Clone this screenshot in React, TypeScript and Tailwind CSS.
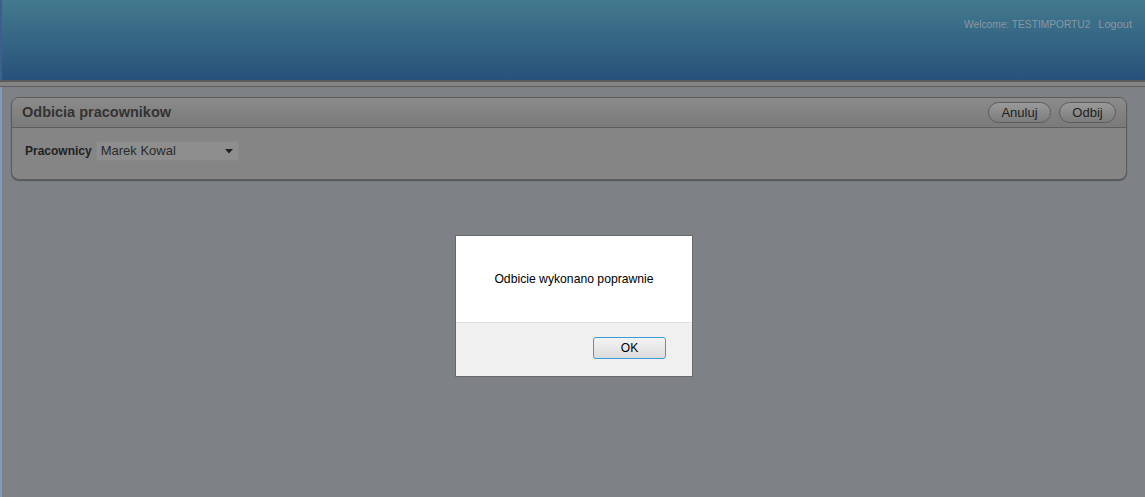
import React from "react";

export default function App() {
  return (
    <div className="relative w-[1145px] h-[497px] overflow-hidden bg-[#7e8287] font-['Liberation_Sans',Arial,sans-serif]">
      {/* header */}
      <div className="h-[80px] bg-gradient-to-b from-[#437a8e] to-[#28517a] border-l-2 border-[#3c5f8e] flex justify-end items-start pt-[16px] pr-[13px]">
        <div className="text-[11px] text-[#8797a4] flex items-baseline gap-[8px]">
          <span className="text-[10.2px]">Welcome: TESTIMPORTU2</span>
          <span>Logout</span>
        </div>
      </div>
      <div className="h-[7px] bg-[#848484] border-t-2 border-b border-[#5a5a5a] border-b-[#5e5e5e]" />
      <div className="border-l-2 border-[#7f9bbd] h-[410px] pl-[9px] pr-[18px] pt-[10px]">
        <div className="rounded-[8px] border border-[#5c5c5c] bg-[#858585] shadow-[0_1px_1px_rgba(0,0,0,0.35)] overflow-hidden">
          <div className="h-[30px] bg-gradient-to-b from-[#8b8b8b] to-[#7a7a7a] border-b border-[#5e5e5e] flex items-center justify-between pl-[10px] pr-[10px]">
            <span className="text-[14.5px] font-bold text-[#333333]">Odbicia pracownikow</span>
            <div className="flex gap-[8px]">
              <button className="w-[63px] h-[21px] rounded-full border border-[#5c5c5c] bg-gradient-to-b from-[#9a9a9a] to-[#7c7c7c] text-[13px] text-[#222] leading-none">Anuluj</button>
              <button className="w-[57px] h-[21px] rounded-full border border-[#5c5c5c] bg-gradient-to-b from-[#9a9a9a] to-[#7c7c7c] text-[13px] text-[#222] leading-none">Odbij</button>
            </div>
          </div>
          <div className="h-[51px] flex items-start pt-[13px] pl-[13px]">
            <span className="text-[12px] font-bold text-[#222] leading-[20px] mr-[4px]">Pracownicy</span>
            <div className="w-[143px] h-[20px] bg-[#8e8e8e] border border-[#888] flex items-center justify-between pl-[4px] pr-[5px]">
              <span className="text-[13px] text-[#2a2a2a]">Marek Kowal</span>
              <svg width="8" height="5" viewBox="0 0 8 5"><path d="M0 0h8L4 4.5z" fill="#222" /></svg>
            </div>
          </div>
        </div>
      </div>

      {/* dialog */}
      <div className="absolute left-[455px] top-[235px] w-[238px] h-[142px] bg-white border border-[#6a6a6a] flex flex-col">
        <div className="h-[86px] flex items-center justify-center">
          <span className="text-[12.2px] text-black">Odbicie wykonano poprawnie</span>
        </div>
        <div className="flex-1 bg-[#f0f0f0] border-t border-[#dfdfdf] flex justify-end items-start pt-[14px] pr-[26px]">
          <button className="w-[73px] h-[22px] rounded-[3px] border border-[#3c9ad6] bg-gradient-to-b from-[#f3f3f3] to-[#dcdcdc] text-[12px] text-black leading-none">OK</button>
        </div>
      </div>
    </div>
  );
}
